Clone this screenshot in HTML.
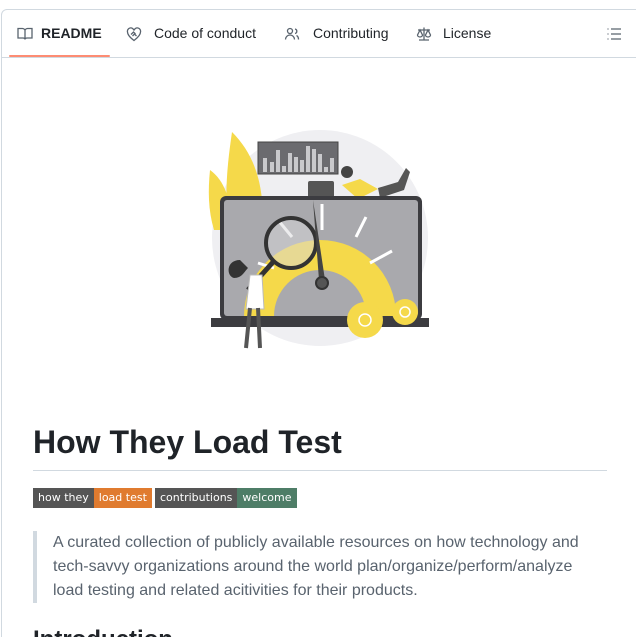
<!DOCTYPE html>
<html><head><meta charset="utf-8"><style>
*{margin:0;padding:0;box-sizing:border-box}
html,body{width:636px;height:637px;overflow:hidden}
body{background:#fff;font-family:"Liberation Sans",sans-serif;color:#1f2328;position:relative}
.box{position:absolute;left:1px;top:9px;width:660px;height:660px;border:1px solid #d1d9e0;border-radius:6px}
.nav{position:absolute;left:0;top:0;width:100%;height:48px;border-bottom:1px solid #d1d9e0}
.tab{position:absolute;top:15px;font-size:14px;color:#1f2328}
.ul{position:absolute;left:7px;top:45px;width:101px;height:2px;background:#fd8c73;border-radius:2px}
svg.i{position:absolute}
h1{position:absolute;left:33px;top:424px;font-size:32px;font-weight:bold;line-height:36px}
.hr{position:absolute;left:33px;top:470px;width:574px;height:1px;background:#d1d9e0}
.badge{position:absolute;top:488px;height:20px;font-family:"DejaVu Sans",sans-serif;font-size:11px;color:#fff;line-height:20px;display:flex}
.badge span{padding:0 5px}
.bq{position:absolute;left:33px;top:531px;width:4px;height:72px;background:#d1d9e0}
.bqt{position:absolute;left:53px;top:531px;width:540px;font-size:16px;line-height:24px;color:#59636e}
h2{position:absolute;left:33px;top:626px;font-size:24px;font-weight:bold}
</style></head><body>
<div class="box">
<div class="nav">
<svg class="i" style="left:15px;top:16px" width="16" height="16" viewBox="0 0 16 16" fill="none" stroke="#59636e" stroke-width="1.3"><path d="M1 2.5h4.5c1.2 0 2.5 1 2.5 2v9c0-1-1-1.5-2-1.5H1zM15 2.5h-4.5c-1.2 0-2.5 1-2.5 2v9c0-1 1-1.5 2-1.5H15z"/></svg>
<div class="tab" style="left:39px;font-weight:bold">README</div>
<svg class="i" style="left:124px;top:16px" width="16" height="16" viewBox="0 0 16 16" fill="none" stroke="#59636e" stroke-width="1.3"><path d="M8 14.5C4 11.5 1.5 9 1.5 6A3.3 3.3 0 0 1 8 4.5 3.3 3.3 0 0 1 14.5 6c0 3-2.5 5.5-6.5 8.5z"/><path d="M5 8.5l2.5-2.5 2 2M6.5 10l2-2 2 2"/></svg>
<div class="tab" style="left:152px">Code of conduct</div>
<svg class="i" style="left:282px;top:16px" width="16" height="16" viewBox="0 0 16 16" fill="none" stroke="#59636e" stroke-width="1.3"><circle cx="6" cy="5" r="2.5"/><path d="M1.5 13.5c0-2.5 2-4.5 4.5-4.5s4.5 2 4.5 4.5M11 3a2.3 2.3 0 0 1 0 4.5M12.5 9.5c1.3.6 2 2 2 4"/></svg>
<div class="tab" style="left:311px">Contributing</div>
<svg class="i" style="left:414px;top:16px" width="16" height="16" viewBox="0 0 16 16" fill="none" stroke="#59636e" stroke-width="1.3"><path d="M8 1.5v12.5M3 14h10M2 4h12M4 4l-2.5 5a2.5 2 0 0 0 5 0zM12 4l-2.5 5a2.5 2 0 0 0 5 0z"/></svg>
<div class="tab" style="left:441px">License</div>
<svg class="i" style="left:604px;top:16px" width="16" height="16" viewBox="0 0 16 16" fill="none" stroke="#59636e" stroke-width="1.3"><path d="M5 3h10M5 8h10M5 13h10M1.5 3h1M1.5 8h1M1.5 13h1"/></svg>
<div class="ul"></div>
</div>
</div>
<svg style="position:absolute;left:200px;top:120px" width="240" height="240" viewBox="0 0 240 240">
<circle cx="120" cy="118" r="108" fill="#efeff2"/>
<path d="M32 12c20 20 34 50 30 100H28C24 70 28 40 32 12z" fill="#f5d94a"/>
<path d="M10 50c14 10 22 30 22 60H14C8 90 8 70 10 50z" fill="#f5d94a"/>
<rect x="58" y="22" width="80" height="32" fill="#6b6b6f" stroke="#444" stroke-width="1"/>
<g fill="#c9c9cc"><rect x="63" y="38" width="4" height="14"/><rect x="70" y="42" width="4" height="10"/><rect x="76" y="30" width="4" height="22"/><rect x="82" y="46" width="4" height="6"/><rect x="88" y="33" width="4" height="19"/><rect x="94" y="37" width="4" height="15"/><rect x="100" y="40" width="4" height="12"/><rect x="106" y="26" width="4" height="26"/><rect x="112" y="29" width="4" height="23"/><rect x="118" y="34" width="4" height="18"/><rect x="124" y="47" width="4" height="5"/><rect x="130" y="38" width="4" height="14"/></g>
<rect x="108" y="61" width="26" height="18" rx="2" fill="#555"/>
<path d="M142 65l18-6 18 10-20 10z" fill="#f5d94a"/><path d="M178 68l20-6 8-14 4 4-6 18-24 8z" fill="#555"/><circle cx="147" cy="52" r="6" fill="#444"/>
<rect x="20" y="76" width="202" height="124" rx="6" fill="#3c3c40"/>
<rect x="24" y="80" width="194" height="116" rx="3" fill="#a9a9ad"/>
<path d="M44 196A76 76 0 0 1 196 196H166A46 46 0 0 0 74 196z" fill="#f5d94a"/>
<g stroke="#fff" stroke-width="3"><path d="M58 143l16 5M78 100l14 17M122 84v26M166 97l-10 20M192 131l-22 12"/></g>
<circle cx="91" cy="123" r="25" fill="#d9d9dc" fill-opacity=".5" stroke="#333" stroke-width="4"/>
<path d="M74 141L48 170" stroke="#333" stroke-width="5"/>
<path d="M113 80l12 80-6 0z" fill="#444"/><circle cx="122" cy="163" r="6" fill="#555" stroke="#333" stroke-width="2"/>
<rect x="11" y="198" width="218" height="9" fill="#3c3c40"/>
<circle cx="165" cy="200" r="18" fill="#f5d94a"/><circle cx="165" cy="200" r="6" fill="none" stroke="#fff" stroke-width="1.5"/>
<circle cx="205" cy="192" r="13" fill="#f5d94a"/><circle cx="205" cy="192" r="5" fill="none" stroke="#fff" stroke-width="1.5"/>
<path d="M40 140c-14 0-14 16-6 18 8 0 10-6 14-10z" fill="#333"/>
<path d="M50 155h12l2 34H46z" fill="#fff" stroke="#bbb"/>
<path d="M50 188l-4 40M58 188l2 40" stroke="#555" stroke-width="4"/>
</svg>
<h1>How They Load Test</h1>
<div class="hr"></div>
<div class="badge" style="left:33px"><span style="background:#555">how they</span><span style="background:#e07b2f">load test</span></div>
<div class="badge" style="left:155px"><span style="background:#555">contributions</span><span style="background:#4e7d67">welcome</span></div>
<div class="bq"></div>
<div class="bqt">A curated collection of publicly available resources on how technology and tech-savvy organizations around the world plan/organize/perform/analyze load testing and related acitivities for their products.</div>
<h2>Introduction</h2>
</body></html>
